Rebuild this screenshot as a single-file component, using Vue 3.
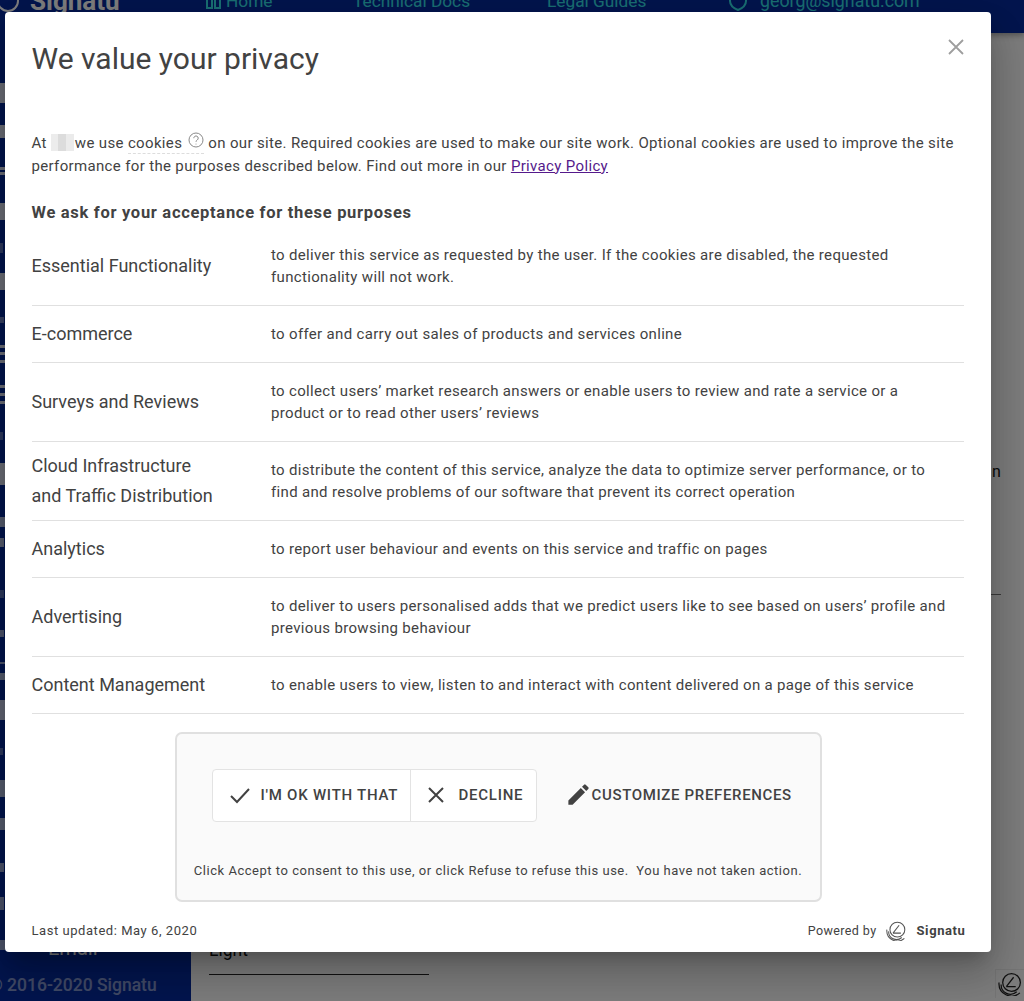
<script setup>
const purposes = [
  { name: ['Essential Functionality'], text: 'to deliver this service as requested by the user. If the cookies are disabled, the requested functionality will not work.' },
  { name: ['E-commerce'], text: 'to offer and carry out sales of products and services online' },
  { name: ['Surveys and Reviews'], text: 'to collect users’ market research answers or enable users to review and rate a service or a product or to read other users’ reviews' },
  { name: ['Cloud Infrastructure', 'and Traffic Distribution'], text: 'to distribute the content of this service, analyze the data to optimize server performance, or to find and resolve problems of our software that prevent its correct operation' },
  { name: ['Analytics'], text: 'to report user behaviour and events on this service and traffic on pages' },
  { name: ['Advertising'], text: 'to deliver to users personalised adds that we predict users like to see based on users’ profile and previous browsing behaviour' },
  { name: ['Content Management'], text: 'to enable users to view, listen to and interact with content delivered on a page of this service' }
]
const railBits = [
  [83, 20, 5, 1], [125, 13, 5, 1], [167, 3, 5, 1], [172, 3, 5, 1], [203, 17, 5, 1], [243, 10, 3, 0.4],
  [273, 17, 5, 1], [317, 6, 4, 0.5], [345, 3, 5, 1], [352, 3, 5, 1], [360, 3, 5, 1], [385, 3, 5, 1],
  [393, 3, 5, 1], [401, 3, 5, 1], [432, 8, 3, 0.4], [463, 22, 5, 1], [517, 10, 5, 0.8], [538, 9, 4, 0.8],
  [590, 8, 4, 0.4], [630, 7, 4, 0.7], [662, 2, 5, 0.7], [673, 7, 5, 0.8], [700, 20, 5, 0.9], [748, 7, 3, 0.4],
  [780, 17, 5, 0.8], [818, 12, 5, 0.8], [863, 9, 4, 0.7], [897, 13, 4, 0.7], [940, 10, 5, 0.7]
]
</script>

<template>
  <div class="page">
    <div class="app">
      <header class="topbar">
        <svg class="brand-mark" viewBox="0 0 24 24"><circle cx="12" cy="12" r="10" /></svg>
        <span class="brand">Signatu</span>
        <nav class="nav">
          <span class="nav-item home">
            <svg class="nav-icon" viewBox="0 0 18 18"><path d="M2 2h5v14H2zM10 2h5v14h-5z" /></svg>Home
          </span>
          <span class="nav-item docs">Technical Docs</span>
          <span class="nav-item legal">Legal Guides</span>
          <span class="nav-item user">
            <svg class="nav-icon shield" viewBox="0 0 20 20"><path d="M10 1l8 3v6c0 4-3 7-8 9-5-2-8-5-8-9V4z" /></svg>georg@signatu.com
          </span>
        </nav>
      </header>
      <div class="body">
        <aside class="sidebar">
          <svg class="rail" width="6" height="968" viewBox="0 33 6 968">
            <rect v-for="b in railBits" :key="b[0]" x="0" :y="b[0]" :width="b[2]" :height="b[1]" fill="#fff" :opacity="b[3] * 0.85" />
          </svg>
          <div class="side-foot">
            <div class="side-email">Email</div>
            <div class="copyright">© 2016-2020 Signatu</div>
          </div>
        </aside>
        <main class="content">
          <span class="stray">n</span>
          <div class="stray-line"></div>
          <div class="select">Light</div>
        </main>
      </div>
    </div>

    <div class="corner-logo">
      <svg viewBox="0 0 24 24" class="logo-svg"><circle cx="13" cy="11" r="8.5" /><path d="M3 13a9 9 0 0 0 15 7M1 11a12 12 0 0 0 20 10M8 15l7-9M8 15h9" /></svg>
    </div>

    <div class="overlay"></div>

    <section class="modal">
      <h1 class="title">We value your privacy</h1>
      <svg class="close" viewBox="0 0 16 16"><path d="M1 1l14 14M15 1L1 15" /></svg>

      <p class="intro">At <span class="redacted"></span>we use <span class="cookies">cookies <svg class="help" viewBox="0 0 16 16"><circle cx="8" cy="8" r="7" /><path d="M5.8 6.2a2.2 2.2 0 1 1 3.4 1.8c-.8.5-1.2 1-1.2 1.8" /><circle class="dot" cx="8" cy="12" r=".5" /></svg></span> on our site. Required cookies are used to make our site work. Optional cookies are used to improve the site performance for the purposes described below. Find out more in our <a class="policy" href="#">Privacy Policy</a></p>

      <h2 class="ask">We ask for your acceptance for these purposes</h2>

      <div class="purposes">
        <div v-for="p in purposes" :key="p.name[0]" class="row">
          <div class="row-name"><div v-for="line in p.name" :key="line">{{ line }}</div></div>
          <div class="row-text">{{ p.text }}</div>
        </div>
      </div>

      <div class="consent">
        <div class="actions">
          <div class="group">
            <button class="btn ok">
              <svg class="btn-icon" viewBox="0 0 24 24"><path d="M3 13l6 6L21 6" /></svg>I'M OK WITH THAT
            </button>
            <button class="btn no">
              <svg class="btn-icon x" viewBox="0 0 24 24"><path d="M5 5l14 14M19 5L5 19" /></svg>DECLINE
            </button>
          </div>
          <button class="customize">
            <svg class="pen" viewBox="0 0 24 24"><path d="M3 17.25V21h3.75L17.81 9.94l-3.75-3.75L3 17.25zM20.71 7.04a1 1 0 0 0 0-1.41l-2.34-2.34a1 1 0 0 0-1.41 0l-1.83 1.83 3.75 3.75 1.83-1.83z" /></svg>CUSTOMIZE PREFERENCES
          </button>
        </div>
        <p class="note">Click Accept to consent to this use, or click Refuse to refuse this use.&nbsp; You have not taken action.</p>
      </div>

      <footer class="foot">
        <span>Last updated: May 6, 2020</span>
        <span class="powered">Powered by
          <svg viewBox="0 0 24 24" class="logo-svg small"><circle cx="13" cy="11" r="8.5" /><path d="M3 13a9 9 0 0 0 15 7M1 11a12 12 0 0 0 20 10M8 15l7-9M8 15h9" /></svg>
          <b>Signatu</b>
        </span>
      </footer>
    </section>
  </div>
</template>

<style>
html, body { margin: 0; padding: 0; }
</style>

<style scoped>
.page {
  position: relative;
  width: 1024px;
  height: 1001px;
  overflow: hidden;
  font-family: Roboto, "Liberation Sans", sans-serif;
  color: #424242;
}
.app { display: flex; flex-direction: column; height: 1001px; background: #fafafa; }
.topbar {
  flex: none;
  height: 65px;
  margin-top: -32px;
  display: flex;
  align-items: center;
  background: #072a9c;
  color: #fff;
  box-shadow: 0 2px 6px rgba(0, 0, 0, .35);
  position: relative;
}
.brand-mark { width: 24px; height: 24px; margin-left: -4px; fill: none; stroke: #fff; stroke-width: 2; }
.brand { font-size: 26px; font-weight: 700; margin-left: 10px; width: 94px; }
.nav { display: flex; align-items: center; font-size: 17.3px; color: #35e0e8; }
.nav-item { display: flex; align-items: center; white-space: nowrap; }
.nav-icon { width: 18px; height: 18px; fill: none; stroke: currentColor; stroke-width: 2; margin-right: 3px; }
.shield { width: 20px; height: 20px; margin-right: 12px; }
.home { margin-left: 81px; width: 148px; }
.docs { width: 194px; }
.legal { width: 181px; }
.user { font-size: 17.8px; }
.body { flex: 1; display: flex; min-height: 0; }
.sidebar {
  position: relative;
  flex: none;
  width: 191px;
  background: #072a9c;
  display: flex;
  flex-direction: column;
  justify-content: flex-end;
}
.rail { position: absolute; left: 0; top: 0; }
.side-foot { color: #fff; }
.side-email { font-size: 20px; margin-left: 48px; margin-bottom: 15px; }
.copyright { font-size: 17.5px; font-weight: 500; white-space: nowrap; margin: 0 0 6px -11px; opacity: .5; }
.content { flex: 1; display: flex; flex-direction: column; color: #111; }
.stray { font-size: 16px; margin: 429px 0 0 801px; height: 20px; }
.stray-line { height: 1px; width: 10px; background: #777; margin: 112px 0 0 800px; }
.select {
  margin: auto 0 26px 18px;
  width: 220px;
  border-bottom: 1px solid #222;
  font-size: 17.5px;
  height: 32px;
  line-height: 14px;
  box-sizing: border-box;
}
.corner-logo { position: absolute; right: 0; bottom: 3px; width: 29px; height: 29px; border-left: 1px solid rgba(0, 0, 0, .06); border-top: 1px solid rgba(0, 0, 0, .06); box-sizing: border-box; }
.corner-logo .logo-svg { width: 25px; height: 25px; margin: 1px 0 0 2px; }
.logo-svg { display: inline-block; fill: none; stroke: #222; stroke-width: 1.2; }
.overlay { position: absolute; inset: 0; background: rgba(0, 0, 0, .5); }
.modal {
  position: absolute;
  left: 5px;
  top: 12px;
  width: 986px;
  height: 940px;
  box-sizing: border-box;
  padding: 0 27.5px 0 26.5px;
  background: #fff;
  border-radius: 4px;
  box-shadow: 0 11px 15px -7px rgba(0,0,0,.2), 0 24px 38px 3px rgba(0,0,0,.14), 0 9px 46px 8px rgba(0,0,0,.12);
  display: flex;
  flex-direction: column;
}
.title { margin: 28px 0 0; font-size: 30px; line-height: 38px; font-weight: 400; color: #424242; }
.close { position: absolute; right: 27.5px; top: 27px; width: 16px; height: 16px; fill: none; stroke: #9e9e9e; stroke-width: 1.8; }
.intro { margin: 54px 0 0; font-size: 15px; line-height: 22.6px; letter-spacing: .345px; color: #424242; }
.redacted {
  display: inline-block;
  width: 23px;
  height: 17px;
  margin-right: 1px;
  vertical-align: -3px;
  background: linear-gradient(90deg, #ececec 0 30%, #dcdcdc 30% 65%, #ebebeb 65%);
}
.cookies { border-bottom: 1px dashed #ddd; padding-bottom: 1px; }
.help { width: 16px; height: 16px; vertical-align: 0; margin-left: 2px; fill: none; stroke: #8a8a8a; stroke-width: 1; }
.help .dot { fill: #8a8a8a; stroke: none; }
.policy { color: #551a8b; text-decoration: underline; }
.ask { margin: 25px 0 0; font-size: 16.5px; line-height: 22px; font-weight: 700; letter-spacing: .7px; color: #424242; }
.purposes { margin-top: 3px; }
.row {
  display: flex;
  align-items: center;
  box-sizing: border-box;
  min-height: 57px;
  padding: 17px 0;
  border-bottom: 1px solid #e0e0e0;
}
.row-name { flex: none; width: 239.5px; font-size: 18px; line-height: 30px; margin: -8px 0; color: #424242; }
.row-text { flex: 1; font-size: 15px; line-height: 22px; letter-spacing: .33px; padding-right: 14px; color: #424242; }
.consent {
  align-self: center;
  box-sizing: border-box;
  width: 647px;
  height: 170px;
  margin-top: 18px;
  margin-left: 1px;
  background: #fafafa;
  border: 2px solid #e0e0e0;
  border-radius: 7px;
  display: flex;
  flex-direction: column;
  align-items: center;
}
.actions { display: flex; align-items: center; align-self: flex-start; margin-top: 35px; margin-left: 35px; }
.group { display: flex; height: 53px; box-sizing: border-box; background: #fff; border: 1px solid #e3e3e3; border-radius: 4px; }
.btn, .customize {
  display: flex;
  align-items: center;
  border: 0;
  background: none;
  padding: 0 0 2px;
  font-family: Roboto, "Liberation Sans", sans-serif;
  font-size: 15px;
  font-weight: 500;
  letter-spacing: .75px;
  color: #424242;
  white-space: nowrap;
}
.ok { width: 198px; padding-left: 15px; box-sizing: border-box; border-right: 1px solid #e3e3e3; }
.no { width: 125px; padding-left: 13px; box-sizing: border-box; }
.btn-icon { width: 24px; height: 24px; margin-right: 9px; fill: none; stroke: #424242; stroke-width: 2; }
.x { margin-right: 11px; }
.customize { margin-left: 29px; letter-spacing: .65px; }
.pen { width: 27px; height: 27px; margin-left: -1px; fill: #424242; }
.note { margin: 40px 0 0; font-size: 13px; line-height: 18px; letter-spacing: .53px; color: #424242; white-space: nowrap; }
.foot {
  display: flex;
  justify-content: space-between;
  align-items: center;
  margin-top: 18px;
  margin-right: -2px;
  font-size: 13px;
  letter-spacing: .55px;
  color: #424242;
}
.powered { display: flex; align-items: center; font-size: 12.5px; letter-spacing: .4px; }
.small { width: 21px; height: 21px; margin: 0 10px 0 9px; stroke: #555; }
.powered b { font-size: 13px; font-weight: 700; letter-spacing: .6px; color: #424242; }
</style>
